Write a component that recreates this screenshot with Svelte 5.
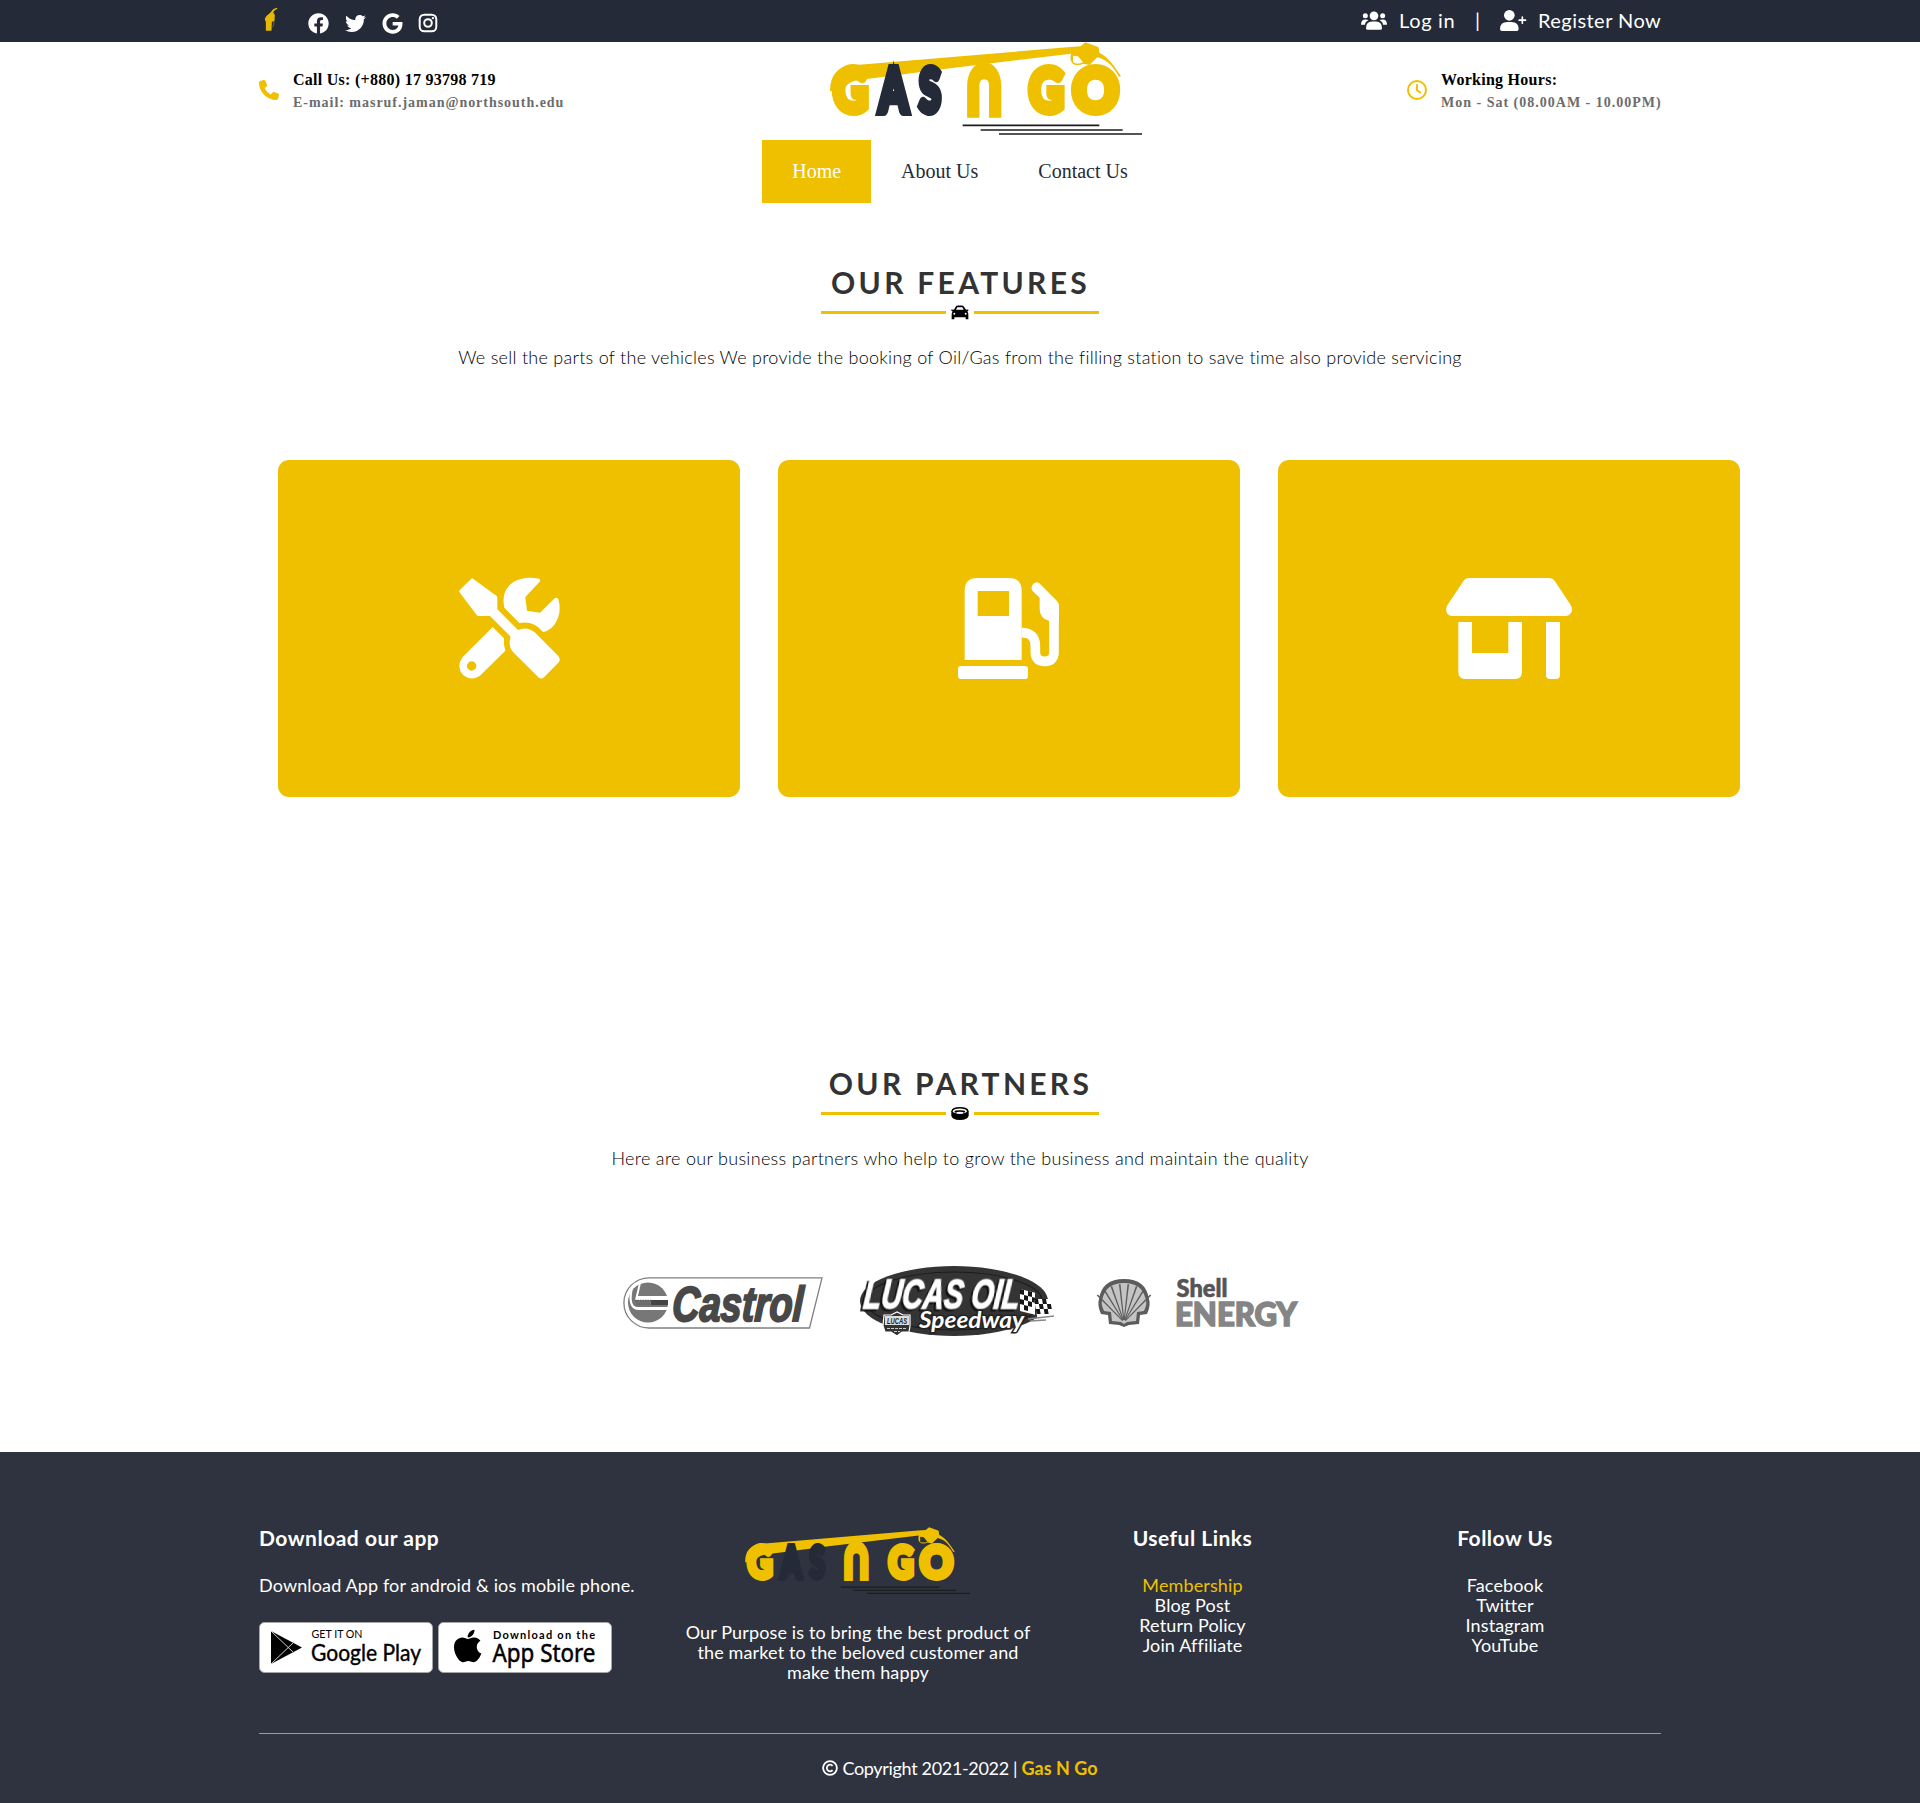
<script>
  const usefulLinks = ['Membership', 'Blog Post', 'Return Policy', 'Join Affiliate'];
  const followLinks = ['Facebook', 'Twitter', 'Instagram', 'YouTube'];
  const rays = [-62, -44, -27, -9, 9, 27, 44, 62];
</script>

{#snippet logo()}
  <svg class="logo-art" viewBox="240 21 936 279" aria-label="Gas N Go">
    <g class="yellow">
      <path d="M240 168Q240 96 310 91L960 36L992 34L1006 22L1046 37L1048 53C1080 70 1095 98 1113 123L1107 125C1090 98 1076 75 1042 67L1018 90L1000 86C980 95 955 90 963 56L588 101L380 128L320 136Q284 144 284 168Z" />
      <text class="mark" x="250" y="232" textLength="104" lengthAdjust="spacingAndGlyphs">G</text>
      <text class="arch" transform="translate(655 230) scale(1 1.13)" textLength="95" lengthAdjust="spacingAndGlyphs">∩</text>
      <text class="mark" x="837" y="232" textLength="104" lengthAdjust="spacingAndGlyphs">G</text>
      <text class="mark" x="968" y="232" textLength="137" lengthAdjust="spacingAndGlyphs">O</text>
    </g>
    <g class="navy">
      <text class="mark" x="388" y="232" textLength="86" lengthAdjust="spacingAndGlyphs">A</text>
      <text class="mark" x="508" y="232" textLength="64" lengthAdjust="spacingAndGlyphs">S</text>
    </g>
    <path d="M969 62L984 64L999 82Q982 90 969 82Z" class="cutout" />
    <path d="M638 271H1048M692 285H1118M747 297H1176" class="speed" />
  </svg>
{/snippet}

<div class="topbar">
  <div class="container bar">
    <div class="social">
      <svg class="pump" viewBox="78 22 38 72"><path d="M80 93V66L77 60Q77 51 90 42L96 36Q100 27 113 24L115 27Q105 30 102 38L107 46L106 64L98 68L97 93Z" fill="#e6b905" /><path d="M98 65Q107 64 104 74L100 83" fill="none" stroke="#8d7720" stroke-width="2.500" /></svg>
      <svg class="si" viewBox="0 0 512 512"><path d="M504 256C504 119 393 8 256 8S8 119 8 256c0 123.780 90.690 226.380 209.250 245V327.690h-63V256h63v-54.640c0-62.150 37-96.480 93.670-96.480 27.140 0 55.520 4.840 55.520 4.840v61h-31.280c-30.800 0-40.410 19.120-40.410 38.730V256h68.780l-11 71.690h-57.780V501C413.310 482.380 504 379.780 504 256z" /></svg>
      <svg class="si" viewBox="0 0 512 512"><path d="M459.37 151.716c.325 4.548.325 9.097.325 13.645 0 138.72-105.583 298.558-298.558 298.558-59.452 0-114.68-17.219-161.137-47.106 8.447.974 16.568 1.299 25.34 1.299 49.055 0 94.213-16.568 130.274-44.832-46.132-.975-84.792-31.188-98.112-72.772 6.498.974 12.995 1.624 19.818 1.624 9.421 0 18.843-1.3 27.614-3.573-48.081-9.747-84.143-51.98-84.143-102.985v-1.299c13.969 7.797 30.214 12.67 47.431 13.319-28.264-18.843-46.781-51.005-46.781-87.391 0-19.492 5.197-37.36 14.294-52.954 51.655 63.675 129.3 105.258 216.365 109.807-1.624-7.797-2.599-15.918-2.599-24.04 0-57.828 46.782-104.934 104.934-104.934 30.213 0 57.502 12.67 76.67 33.137 23.715-4.548 46.456-13.32 66.599-25.34-7.798 24.366-24.366 44.833-46.132 57.827 21.117-2.273 41.584-8.122 60.426-16.243-14.292 20.791-32.161 39.308-52.628 54.253z" /></svg>
      <svg class="si" viewBox="-8 0 504 512"><path d="M488 261.8C488 403.3 391.1 504 248 504 110.8 504 0 393.2 0 256S110.8 8 248 8c66.8 0 123 24.5 166.3 64.9l-67.5 64.9C258.5 52.6 94.3 116.6 94.3 256c0 86.5 69.1 156.6 153.7 156.6 98.2 0 135-70.4 140.8-106.9H248v-85.3h236.1c2.3 12.7 3.9 24.9 3.9 41.4z" /></svg>
      <svg class="si insta" viewBox="0 0 20 20"><rect x="1.7" y="1.7" width="16.6" height="16.6" rx="4.5" /><circle cx="10" cy="10" r="3.8" /><circle class="dot" cx="14.9" cy="5.1" r="1.2" /></svg>
    </div>
    <div class="account">
      <svg class="users" viewBox="64 34 78 56"><circle cx="77" cy="48" r="7.5" /><circle cx="129" cy="48" r="7.5" /><circle cx="103" cy="48" r="13" /><path d="M64 75Q64 59 77 59Q85 59 86 61Q76 66 76 75ZM142 75Q142 59 129 59Q121 59 120 61Q130 66 130 75ZM79 85Q79 65 97 65H109Q127 65 127 85Q127 90 122 90H84Q79 90 79 85Z" /></svg>
      <span class="login">Log in</span>
      <span class="pipe">|</span>
      <svg class="userplus" viewBox="480 30 78 63"><circle cx="508" cy="46" r="16" /><path d="M480 87Q480 66 502 66H514Q536 66 536 87Q536 93 530 93H486Q480 93 480 87Z" /><path d="M547 51V70M537.5 60.5H556.5" stroke="#fff" stroke-width="5" stroke-linecap="round" /></svg>
      <span class="register">Register Now</span>
    </div>
  </div>
</div>

<header class="container head">
  <div class="info">
    <svg class="gold" viewBox="0 0 512 512"><path d="M164.9 24.6c-7.7-18.6-28-28.5-47.4-23.2l-88 24C12.1 30.2 0 46 0 64C0 311.4 200.6 512 448 512c18 0 33.8-12.1 38.6-29.5l24-88c5.3-19.4-4.6-39.7-23.2-47.4l-96-40c-16.3-6.8-35.2-2.1-46.3 11.6L304.7 368C234.3 334.7 177.3 277.7 144 207.3L193.3 167c13.7-11.2 18.4-30 11.6-46.3l-40-96z" /></svg>
    <div>
      <div class="strong">Call Us: (+880) 17 93798 719</div>
      <div class="sub email">E-mail: masruf.jaman@northsouth.edu</div>
    </div>
  </div>
  <div class="brand">{@render logo()}</div>
  <div class="info">
    <svg class="clock" viewBox="0 0 20 20"><circle cx="10" cy="10" r="9" /><path d="M10 5V10.200L13.200 12.500" /></svg>
    <div>
      <div class="strong">Working Hours:</div>
      <div class="sub hours">Mon - Sat (08.00AM - 10.00PM)</div>
    </div>
  </div>
</header>

<nav>
  <a class="active" href="#home">Home</a>
  <a href="#about">About Us</a>
  <a href="#contact">Contact Us</a>
</nav>

<section class="features">
  <h2>OUR FEATURES</h2>
  <div class="rule">
    <span></span>
    <svg viewBox="455 167 54 44"><path d="M464 181L469 172Q471 168 476 168H487Q492 168 494 172L500 181L507 180V184L504 186Q507 189 507 194V209H499V203H465V209H457V194Q457 189 460 186L456 184V180ZM470 181H493L489 173H474Z" fill-rule="evenodd" /><circle cx="465" cy="193" r="3" fill="#fff" /><circle cx="499" cy="193" r="3" fill="#fff" /></svg>
    <span></span>
  </div>
  <p class="p-feat">We sell the parts of the vehicles We provide the booking of Oil/Gas from the filling station to save time also provide servicing</p>
  <div class="cards">
    <div class="card">
      <svg class="ic" viewBox="86 84 303 303">
        <path d="M88 121L123 86Q125 84 128 86L199 138Q201 140 201 143V178L263 240Q290 228 313 247L384 318Q391 327 386 336L341 382Q333 389 324 382L248 306Q232 287 241 260L179 198H144Q141 198 139 195L87 126Q86 123 88 121Z" />
        <path d="M222 173Q211 124 248 97Q280 77 326 86Q332 89 328 95L285 141L290 182L329 188L374 144Q381 141 384 147Q396 190 372 224Q359 241 340 246Q336 246 332 240Q308 211 267 219Z" />
        <path fill-rule="evenodd" d="M187 231L221 265Q218 283 225 302L152 374Q125 396 98 375Q76 350 97 321ZM110 348A14 14 0 1 0 138 348A14 14 0 1 0 110 348Z" />
      </svg>
    </div>
    <div class="card">
      <svg class="ic fuel" viewBox="84 84 303 303">
        <path fill-rule="evenodd" d="M104 330V122Q104 84 142 84H237Q275 84 275 122V330ZM143 123H237V198H143Z" />
        <rect x="84" y="348" width="210" height="39" rx="10" />
        <path d="M275 248Q316 248 316 288V306Q316 334 344 334Q372 334 372 306V170" class="hose" />
        <path d="M307 105Q316 91 328 100L381 153Q387 160 387 170V213H358Q329 205 329 178V143L307 122Q302 114 307 105Z" />
      </svg>
    </div>
    <div class="card">
      <svg class="shop" viewBox="78 84 378 303">
        <path d="M148 84H387Q398 84 404 92L452 165Q461 181 450 193Q445 198 437 198H97Q88 198 83 192Q74 180 82 166L130 94Q137 84 148 84ZM115 216H156V309H265V216H306V366Q306 387 285 387H136Q115 387 115 366ZM378 216H420V374Q420 387 407 387H391Q378 387 378 374Z" />
      </svg>
    </div>
  </div>
</section>

<section class="partners">
  <h2>OUR PARTNERS</h2>
  <div class="rule">
    <span></span>
    <svg viewBox="483 141 57 43"><path d="M484 155Q486 142 511 142Q537 142 539 155V169Q537 183 511 183Q486 183 484 169Z" /><ellipse cx="511" cy="155" rx="22" ry="8" fill="#fff" /><ellipse cx="511" cy="157" rx="17" ry="4.500" /><ellipse cx="511" cy="160" rx="11" ry="3" fill="#fff" /></svg>
    <span></span>
  </div>
  <p class="p-part">Here are our business partners who help to grow the business and maintain the quality</p>
  <div class="logos">
    <svg viewBox="0 0 200 100" aria-label="Castrol">
      <path d="M199 27.800H26A25 25 0 0 0 26 78H186.500Z" fill="#fff" stroke="#808080" stroke-width="1.300" />
      <ellipse cx="25" cy="52.500" rx="20" ry="20" fill="#777" />
      <path d="M16 33L12 50H46V46H15L18 33Z" fill="#fff" />
      <path d="M7 40Q4 61 17 60H46V57H14Q6 56 10 38Z" fill="#fff" />
      <path d="M28 52.500H45" stroke="#444" stroke-width="5" />
      <path d="M12 51H28M13 54H28" stroke="#666" stroke-width="2.500" stroke-dasharray="1.500 1" />
      <text class="castrol" transform="translate(48.500 70.500) skewX(-3)" textLength="131" lengthAdjust="spacingAndGlyphs">Castrol</text>
    </svg>
    <svg viewBox="0 0 200 100" aria-label="Lucas Oil Speedway">
      <ellipse cx="94" cy="51" rx="94" ry="35" fill="#343434" />
      <ellipse cx="94" cy="51" rx="88" ry="29" fill="none" stroke="#1c1c1c" stroke-width="1.200" />
      <text class="lucas" transform="translate(2.500 58.500) skewX(-6)" textLength="156" lengthAdjust="spacingAndGlyphs">LUCAS OIL</text>
      <g transform="translate(160 39) skewY(14)">
        <rect width="15" height="22" fill="#fff" />
        <path d="M0 0H4V5H0ZM8 0H12V5H8ZM4 5H8V10H4ZM12 5H15V10H12ZM0 10H4V15H0ZM8 10H12V15H8ZM4 15H8V20H4Z" fill="#161616" />
      </g>
      <g transform="translate(174 49) skewX(10)">
        <rect width="16" height="18" fill="#fff" />
        <path d="M0 0H4V5H0ZM8 0H12V5H8ZM4 5H8V10H4ZM12 5H16V10H12ZM0 10H4V15H0ZM8 10H12V15H8Z" fill="#161616" />
      </g>
      <path d="M168 69L194 66M170 71L186 70" stroke="#888" stroke-width="1.500" />
      <path d="M24 65L31 65L37 62L43 65H50V76L49 82L42 82L37 86L31 82L25 82L23 76Z" fill="#333" stroke="#fff" stroke-width="1.200" />
      <path d="M25 66H49V75H25Z" fill="#ddd" />
      <text class="tiny" x="27" y="74" textLength="20" lengthAdjust="spacingAndGlyphs">LUCAS</text>
      <path d="M27 78.500H47M34 81.500H40" stroke="#ccc" stroke-width="1" stroke-dasharray="3 1" />
      <text class="speedway" x="59" y="78" textLength="105" lengthAdjust="spacingAndGlyphs">Speedway</text>
    </svg>
    <svg viewBox="0 0 200 100" aria-label="Shell Energy">
      <path d="M11 74L10 65L3 64Q-1 55 1 49Q4 29 26 29Q48 29 51 49Q53 55 49 64L42 65L41 74L31 75L26 77L21 75Z" fill="#5c5c5c" />
      <path d="M14 71L13 62L6 61Q2 53 5 47Q9 33 26 33Q43 33 47 47Q50 53 46 61L39 62L38 71L29 72L26 74L23 72Z" fill="#c4c4c4" />
      {#each rays as angle}
        <path d="M25.500 70L25.200 34H26.800L26.500 70Z" fill="#5c5c5c" transform="rotate({angle * 0.72} 26 72)" />
      {/each}
      <text class="shell" x="78.500" y="46.500" textLength="51" lengthAdjust="spacingAndGlyphs">Shell</text>
      <text class="energy" x="77" y="75.500" textLength="122" lengthAdjust="spacingAndGlyphs">ENERGY</text>
    </svg>
  </div>
</section>

<footer>
  <div class="container cols">
    <div class="app">
      <h3>Download our app</h3>
      <p class="p-app">Download App for android &amp; ios mobile phone.</p>
      <div class="badges">
        <svg viewBox="0 0 174 51">
          <rect x=".5" y=".5" width="173" height="50" rx="5" fill="#fff" stroke="#a6a6a6" />
          <path d="M12 9L43 25.500L12 42Z" fill="#000" />
          <path d="M12 9L35 31M12 42L35 20" stroke="#ccc" stroke-width="1" />
          <text class="get" x="52.500" y="16" textLength="51" lengthAdjust="spacingAndGlyphs">GET IT ON</text>
          <text class="gplay" x="52" y="39" textLength="110" lengthAdjust="spacingAndGlyphs">Google Play</text>
        </svg>
        <svg viewBox="0 0 174 51">
          <rect x=".5" y=".5" width="173" height="50" rx="5" fill="#fff" stroke="#a6a6a6" />
          <path transform="translate(15.700 5.400) scale(.0725)" d="M318.7 268.7c-.2-36.7 16.4-64.4 50-84.8-18.8-26.9-47.2-41.7-84.7-44.6-35.5-2.8-74.3 20.7-88.5 20.7-15 0-49.4-19.7-76.4-19.7C63.3 141.2 4 184.8 4 273.5q0 39.3 14.4 81.2c12.8 36.7 59 126.7 107.2 125.2 25.2-.6 43-17.9 75.8-17.9 31.8 0 48.3 17.9 76.4 17.9 48.6-.7 90.4-82.5 102.6-119.3-65.2-30.7-61.7-90-61.7-91.9zm-56.6-164.2c27.3-32.4 24.8-61.9 24-72.5-24.1 1.4-52 16.4-67.9 34.9-17.5 19.8-27.8 44.3-25.6 71.9 26.1 2 49.9-11.4 69.5-34.3z" />
          <text class="dl" x="55" y="17" textLength="102" lengthAdjust="spacing">Download on the</text>
          <text class="astore" x="54.500" y="40" textLength="103" lengthAdjust="spacingAndGlyphs">App Store</text>
        </svg>
      </div>
    </div>
    <div class="purpose">
      <div class="flogo">{@render logo()}</div>
      <p>Our Purpose is to bring the best product of<br />the market to the beloved customer and<br />make them happy</p>
    </div>
    <div class="links">
      <h3>Useful Links</h3>
      <ul>
        {#each usefulLinks as item, i}<li class:gold-text={i === 0}>{item}</li>{/each}
      </ul>
    </div>
    <div class="links">
      <h3>Follow Us</h3>
      <ul>
        {#each followLinks as item}<li>{item}</li>{/each}
      </ul>
    </div>
  </div>
  <div class="container copy">
    <svg viewBox="0 0 16 16"><circle cx="8" cy="8" r="6.900" /><path d="M10.600 10.200A3.300 3.300 0 1 1 10.600 5.800" /></svg>
    <span>Copyright 2021-2022 | <b>Gas N Go</b></span>
  </div>
</footer>

<style>
  :global(body) { background: #fff; }
  :global(#app) { font-family: Lato, 'Open Sans', sans-serif; }
  svg { display: block; flex: none; overflow: visible; }
  h2, h3, p, ul { margin: 0; padding: 0; }
  .container { width: 1402px; margin: 0 auto; }

  .topbar { background: #242a37; height: 42px; color: #fff; }
  .bar { display: flex; justify-content: space-between; height: 42px; }
  .topbar svg { fill: #fff; }
  .social { display: flex; align-items: flex-start; padding-left: 6px; }
  .pump { width: 13px; height: 24px; margin: 7px 30px 0 0; }
  .si { width: 21px; height: 21px; margin: 13px 16px 0 0; }
  .topbar .insta { width: 20px; height: 20px; margin-left: -1px; fill: none; stroke: #fff; stroke-width: 2; }
  .topbar .insta .dot { fill: #fff; stroke: none; }
  .account { display: flex; align-items: center; height: 40px; font-size: 20px; }
  .users { width: 26px; height: 19px; margin-right: 12px; }
  .login { width: 76px; letter-spacing: .65px; }
  .pipe { width: 25px; }
  .userplus { width: 26px; height: 21px; margin-right: 12px; }
  .register { width: 123px; white-space: nowrap; letter-spacing: .45px; }

  .head { display: grid; grid-template-columns: 571px 577px 254px; height: 98px; font-family: 'Liberation Serif', serif; font-weight: 700; }
  .info { display: flex; padding-top: 26px; gap: 14px; white-space: nowrap; }
  .info svg { width: 20px; height: 20px; margin-top: 12px; }
  .gold { fill: #eec000; }
  .clock { fill: none; stroke: #eec000; stroke-width: 2; stroke-linecap: round; stroke-linejoin: round; }
  .strong { font-size: 16px; line-height: 24px; color: #000; letter-spacing: .27px; }
  .sub { font-size: 14px; line-height: 21px; color: #6c6c6c; }
  .email { letter-spacing: .97px; }
  .hours { letter-spacing: 1px; }
  .brand { width: 312px; height: 93px; }
  .logo-art { width: 100%; height: 100%; }
  .mark { font: 900 182px Lato, sans-serif; stroke-width: 24; }
  .arch { font: 900 211px Lato, sans-serif; stroke-width: 29; }
  .yellow { fill: #eec000; }
  .yellow text { stroke: #eec000; }
  .navy { fill: #242a37; }
  .navy text { stroke: #242a37; }
  .cutout { fill: #fff; }
  .purpose .cutout { fill: #2e333f; }
  .speed { fill: none; stroke: #1d1d1d; stroke-width: 5; }

  nav { display: flex; justify-content: center; font: 20px 'Liberation Serif', serif; height: 63px; }
  nav a { padding: 0 30px; line-height: 63px; color: #242a37; text-decoration: none; }
  nav .active { background: #eec000; color: #fff; }

  section { text-align: center; }
  .features { padding-top: 60px; height: 861px; box-sizing: border-box; }
  .partners { height: 388px; }
  h2 { font-size: 30px; line-height: 38px; font-weight: 700; color: #333; letter-spacing: 3.3px; text-indent: 1px; }
  .rule { display: flex; justify-content: center; align-items: center; gap: 5px; height: 20px; margin-top: 1px; }
  .rule span { width: 125px; height: 3px; background: #eec000; }
  .rule svg { width: 18px; height: 15px; }
  section p { font-size: 18px; font-weight: 300; line-height: 26px; margin-top: 22px; color: #000; white-space: nowrap; }
  .p-feat { letter-spacing: .27px; }
  .p-part { letter-spacing: .31px; }
  .cards { display: flex; gap: 38px; margin: 90px 0 0 278px; }
  .card { width: 462px; height: 337px; border-radius: 11px; background: #eec000; display: grid; place-items: center; }
  .card svg { fill: #fff; }
  .ic { width: 101px; height: 101px; }
  .fuel { margin-right: 1px; }
  .shop { width: 126px; height: 101px; }
  .card .hose { fill: none; stroke: #fff; stroke-width: 29; }
  .logos { display: flex; justify-content: center; gap: 37.500px; margin-top: 79px; }
  .logos svg { width: 200px; height: 100px; }
  .castrol { font: italic 700 49px 'Liberation Sans', sans-serif; fill: #484848; stroke: #484848; stroke-width: 2; }
  .lucas { font: italic 700 43px 'Liberation Sans', sans-serif; fill: #fff; stroke: #fff; stroke-width: 1.500; filter: drop-shadow(-2px 2px 0 #111); }
  .tiny { font: italic 700 9px 'Liberation Sans', sans-serif; fill: #222; }
  .speedway { font: italic 700 22px Lato, sans-serif; fill: #fff; stroke: #222; stroke-width: 3; paint-order: stroke; }
  .shell { font: 900 24px Lato, sans-serif; fill: #555; stroke: #555; stroke-width: .6; }
  .energy { font: 900 32px Lato, sans-serif; fill: #858585; stroke: #858585; stroke-width: 1.600; }

  footer { background: #2e333f; color: #fff; height: 351px; font-size: 18px; line-height: 20px; letter-spacing: .13px; }
  .cols { display: grid; grid-template-columns: 421px 356px 313px 312px; height: 281px; }
  .cols > div { padding-top: 72px; }
  h3 { font-size: 21px; line-height: 28px; font-weight: 700; letter-spacing: .5px; }
  .p-app { margin-top: 22px; line-height: 23px; }
  .badges { display: flex; gap: 5px; margin-top: 25px; }
  .badges svg { width: 174px; height: 51px; letter-spacing: 0; }
  .get { font: 12px Lato, sans-serif; }
  .gplay { font: 22.500px Lato, sans-serif; stroke: #000; stroke-width: .4; }
  .dl { font: 700 11px Lato, sans-serif; }
  .astore { font: 24.500px 'Noto Sans', sans-serif; stroke: #000; stroke-width: .5; }
  .purpose, .links { text-align: center; white-space: nowrap; }
  .flogo { width: 225px; height: 67px; margin: 3px 0 0 65px; }
  .purpose p { margin-top: 28px; }
  ul { list-style: none; margin-top: 23px; }
  .gold-text { color: #eec000; }
  .copy { border-top: 1px solid #999ca2; display: flex; justify-content: center; align-items: center; padding-top: 23px; gap: 4px; line-height: 22px; letter-spacing: -.33px; }
  .copy svg { width: 16px; height: 16px; fill: none; stroke: #fff; stroke-width: 1.800; }
  b { color: #eec000; letter-spacing: 0; }
</style>
